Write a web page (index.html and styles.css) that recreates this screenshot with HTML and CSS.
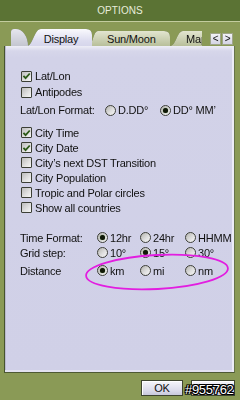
FILE: index.html
```html
<!DOCTYPE html>
<html>
<head>
<meta charset="utf-8">
<link rel="stylesheet" href="styles.css">
</head>
<body>
<div class="titlebar">OPTIONS</div>
<div class="tabs">
  <div class="tab-stub"></div>
  <div class="tab active"><span>Display</span></div>
  <div class="tab sun"><span>Sun/Moon</span></div>
  <div class="tab map"><span>Map</span></div>
  <div class="arrows"><span class="arrow">&lt;</span><span class="arrow">&gt;</span></div>
</div>
<div class="panel">
  <div class="content">
    <div class="group g1">
      <div class="row"><span class="cb on"><svg viewBox="0 0 10 10" width="10" height="10"><path d="M1.6 4.8 L4 7.4 L8.6 2.2" fill="none" stroke="#2c5a18" stroke-width="2"/></svg></span><span>Lat/Lon</span></div>
      <div class="row"><span class="cb"></span><span>Antipodes</span></div>
      <div class="row opts fmt"><span>Lat/Lon Format:</span><span class="opt"><span class="rb"></span>D.DD°</span><span class="opt"><span class="rb on"></span>DD° MM’</span></div>
    </div>
    <div class="group g2">
      <div class="row"><span class="cb on"><svg viewBox="0 0 10 10" width="10" height="10"><path d="M1.6 4.8 L4 7.4 L8.6 2.2" fill="none" stroke="#2c5a18" stroke-width="2"/></svg></span><span>City Time</span></div>
      <div class="row"><span class="cb on"><svg viewBox="0 0 10 10" width="10" height="10"><path d="M1.6 4.8 L4 7.4 L8.6 2.2" fill="none" stroke="#2c5a18" stroke-width="2"/></svg></span><span>City Date</span></div>
      <div class="row"><span class="cb"></span><span>City’s next DST Transition</span></div>
      <div class="row"><span class="cb"></span><span>City Population</span></div>
      <div class="row"><span class="cb"></span><span>Tropic and Polar circles</span></div>
      <div class="row"><span class="cb"></span><span>Show all countries</span></div>
    </div>
    <div class="group g3">
      <div class="row opts tri"><span>Time Format:</span><span class="opt"><span class="rb on"></span>12hr</span><span class="opt"><span class="rb"></span>24hr</span><span class="opt"><span class="rb"></span>HHMM</span></div>
      <div class="row opts tri"><span>Grid step:</span><span class="opt"><span class="rb"></span>10°</span><span class="opt"><span class="rb on"></span>15°</span><span class="opt"><span class="rb"></span>30°</span></div>
      <div class="row opts tri dist"><span>Distance</span><span class="opt"><span class="rb on"></span>km</span><span class="opt"><span class="rb"></span>mi</span><span class="opt"><span class="rb"></span>nm</span></div>
    </div>
    <svg class="mark" width="160" height="46" viewBox="0 0 160 46"><ellipse cx="80" cy="23" rx="71" ry="17" transform="rotate(-3 80 23)" fill="none" stroke="#e21ee0" stroke-width="1.8"/></svg>
  </div>
</div>
<div class="buttons">
  <div class="btn ok">OK</div>
  <div class="btn cancel">Cancel</div>
</div>
<div class="stamp">#955762</div>
</body>
</html>
```
FILE: styles.css
```css
html, body {
  margin: 0;
  padding: 0;
}
body {
  width: 240px;
  height: 400px;
  overflow: hidden;
  background: #8a9a56;
  font-family: "Liberation Sans", Arial, sans-serif;
  font-size: 11px;
  letter-spacing: -0.2px;
  color: #111;
  position: relative;
}
.titlebar {
  height: 21px;
  background: #5b7334;
  border-bottom: 1px solid #c3cc9e;
  color: #e8eddc;
  font-size: 10px;
  letter-spacing: 0.1px;
  text-align: center;
  line-height: 22px;
}
.tabs {
  display: flex;
  align-items: flex-end;
  height: 17px;
  margin-top: 7px;
  padding-left: 11px;
  filter: drop-shadow(0 0 0.6px #4b5630);
}
.tab-stub {
  width: 17px;
  height: 17px;
  background: linear-gradient(#e6e6ee, #c4c6d0);
  border-radius: 3px 12px 0 0 / 3px 17px 0 0;
}
.tab {
  position: relative;
  display: flex;
  align-items: center;
  height: 15px;
  background: linear-gradient(#e2e5d0, #b8bf9a);
}
.tab.active {
  z-index: 2;
  width: 65px;
  height: 17px;
  margin-left: -1px;
  justify-content: center;
  padding-top: 2px;
  box-sizing: border-box;
  background: linear-gradient(#fafafd, #dcdcef 70%, #d6d6eb);
  clip-path: path("M0 17 C6 17 7 0 14 0 H59 Q65 0 65 6 V17 Z");
}
.tab.active span {
  padding-left: 3px;
}
.tab.sun {
  z-index: 1;
  width: 82px;
  margin-left: -4px;
  padding-left: 19px;
  box-sizing: border-box;
  clip-path: path("M0 15 C5 15 5 0 10 0 H76 Q82 0 82 6 V15 Z");
}
.tab.map {
  width: 34px;
  margin-left: 0;
  padding-left: 16px;
  box-sizing: border-box;
  overflow: hidden;
  white-space: nowrap;
  clip-path: path("M0 15 C6 15 7 0 13 0 H32 V15 Z");
}
.tab span {
  padding-top: 1px;
}
.arrows {
  display: flex;
  gap: 1px;
  margin-left: auto;
  margin-right: 7px;
  margin-bottom: 1px;
}
.arrow {
  width: 11px;
  height: 12px;
  box-sizing: border-box;
  background: linear-gradient(#f2f2f8, #d4d4e4);
  border: 1px solid #9fa58a;
  font-size: 10px;
  line-height: 10px;
  text-align: center;
  color: #111;
}
.panel {
  margin: 0 5px 0 4px;
  height: 327px;
  box-sizing: border-box;
  border-left: 1px solid #46532d;
  border-right: 1px solid #67744a;
  border-bottom: 1px solid #4e5a34;
  background: linear-gradient(#eeeef7 0, #d6d6ea 5px, #d2d2e8 12px, #d0d0e7);
  box-shadow: inset -2px 0 0 #ececf6, inset 0 -2px 0 #e2e2f0, inset 1px 0 0 #b8b8cc;
}
.content {
  position: relative;
  padding: 22px 0 0 15px;
}
.row {
  display: flex;
  align-items: center;
  height: 15px;
  white-space: nowrap;
}
.g1 .row {
  height: 16px;
}
.g1 .fmt {
  margin-top: 2px;
}
.g2 {
  margin-top: 7px;
}
.g3 {
  margin-top: 15px;
}
.g3 .dist {
  margin-top: 3px;
}
.cb {
  display: inline-flex;
  align-items: center;
  justify-content: center;
  width: 11px;
  height: 11px;
  box-sizing: border-box;
  margin: 0 3px 0 1px;
  border: 1px solid #3c3f36;
  border-radius: 1px;
  background: linear-gradient(135deg, #bcbcbc, #e2e2e2 60%, #f6f6f6);
}
.opts {
  display: grid;
  align-items: center;
}
.fmt {
  grid-template-columns: 85px 55px auto;
}
.tri {
  grid-template-columns: 77px 43px 45px auto;
}
.opt {
  display: flex;
  align-items: center;
}
.rb {
  position: relative;
  width: 11px;
  height: 11px;
  box-sizing: border-box;
  margin-right: 2px;
  border: 1px solid #3d3f38;
  border-radius: 50%;
  background: linear-gradient(135deg, #b4b4ae, #dedede 55%, #f8f8f8);
}
.rb.on::after {
  content: "";
  position: absolute;
  left: 2px;
  top: 2px;
  width: 5px;
  height: 5px;
  border-radius: 50%;
  background: #101808;
  box-shadow: 0 0 1px #3f6a20;
}
.mark {
  position: absolute;
  left: 72px;
  top: 203px;
}
.buttons {
  display: flex;
  justify-content: flex-end;
  gap: 8px;
  margin: 7px 5px 0 0;
}
.btn {
  height: 16px;
  box-sizing: border-box;
  border: 1px solid #3e4530;
  background: linear-gradient(#f6f6fb, #dadaea 70%, #c8c8dc);
  box-shadow: inset 1px 1px 0 #ffffff;
  text-align: center;
  line-height: 14px;
  color: #111;
}
.ok {
  width: 42px;
}
.cancel {
  width: 44px;
}
.stamp {
  position: absolute;
  left: 185px;
  top: 382px;
  font-size: 13px;
  letter-spacing: -0.3px;
  color: #ffffff;
  text-shadow: 1px 0 0 #000, -1px 0 0 #000, 0 1px 0 #000, 0 -1px 0 #000, 1px 1px 0 #000, -1px -1px 0 #000, 1px -1px 0 #000, -1px 1px 0 #000;
}
```
